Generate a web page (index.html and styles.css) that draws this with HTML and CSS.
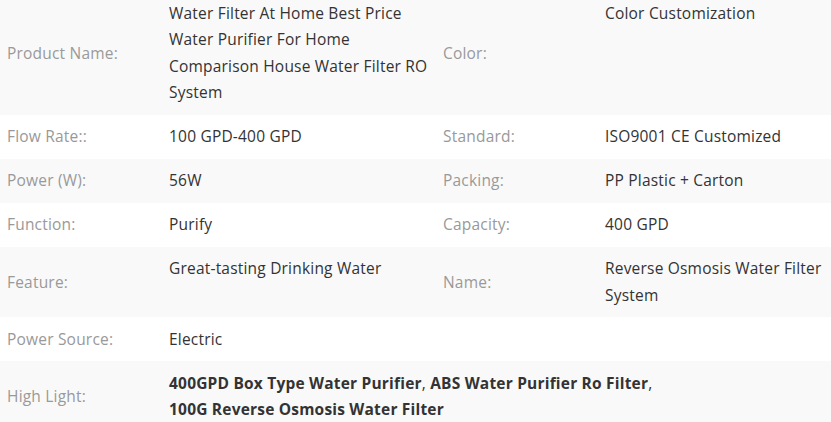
FILE: index.html
```html
<!DOCTYPE html>
<html lang="en">

<head>
    <meta charset="UTF-8">
    <meta name="viewport" content="width=device-width, initial-scale=1.0">
    <title>Specifications</title>
    <link rel="stylesheet" href="styles.css">
</head>

<body>
    <table class="spec-table">
        <colgroup>
            <col class="col-label">
            <col class="col-value">
            <col class="col-label">
            <col class="col-value-last">
        </colgroup>
        <tr class="odd first">
            <th>Product Name:</th>
            <td>Water Filter At Home Best Price Water Purifier For Home Comparison House Water Filter RO System</td>
            <th>Color:</th>
            <td>Color Customization</td>
        </tr>
        <tr>
            <th>Flow Rate::</th>
            <td>100 GPD-400 GPD</td>
            <th>Standard:</th>
            <td>ISO9001 CE Customized</td>
        </tr>
        <tr class="odd">
            <th>Power (W):</th>
            <td>56W</td>
            <th>Packing:</th>
            <td>PP Plastic + Carton</td>
        </tr>
        <tr>
            <th>Function:</th>
            <td>Purify</td>
            <th>Capacity:</th>
            <td>400 GPD</td>
        </tr>
        <tr class="odd">
            <th>Feature:</th>
            <td>Great-tasting Drinking Water</td>
            <th>Name:</th>
            <td>Reverse Osmosis Water Filter System</td>
        </tr>
        <tr>
            <th>Power Source:</th>
            <td colspan="3">Electric</td>
        </tr>
        <tr class="odd">
            <th>High Light:</th>
            <td colspan="3">
                <span class="tag">400GPD Box Type Water Purifier</span>, <span class="tag">ABS Water Purifier Ro Filter</span>,
                <span class="tag">100G Reverse Osmosis Water Filter</span>
            </td>
        </tr>
    </table>
</body>

</html>
```

FILE: styles.css
```css
body {
    margin: 0;
    overflow: hidden;
    background: #fff;
    font-family: "Open Sans", "Noto Sans", sans-serif;
    font-size: 15.5px;
    letter-spacing: 0.2px;
    color: #333;
}

.spec-table {
    width: 838px;
    margin-top: -9px;
    border-collapse: collapse;
    table-layout: fixed;
}

.col-label {
    width: 162px;
}

.col-value {
    width: 274px;
}

.col-value-last {
    width: 240px;
}

.spec-table th,
.spec-table td {
    padding: 8.75px 7px;
    line-height: 26.5px;
    text-align: left;
    vertical-align: top;
}

.spec-table th {
    font-weight: normal;
    color: #999;
    vertical-align: middle;
}

.spec-table tr.odd {
    background: #f9f9f9;
}

.tag {
    font-weight: bold;
    white-space: nowrap;
}
```
